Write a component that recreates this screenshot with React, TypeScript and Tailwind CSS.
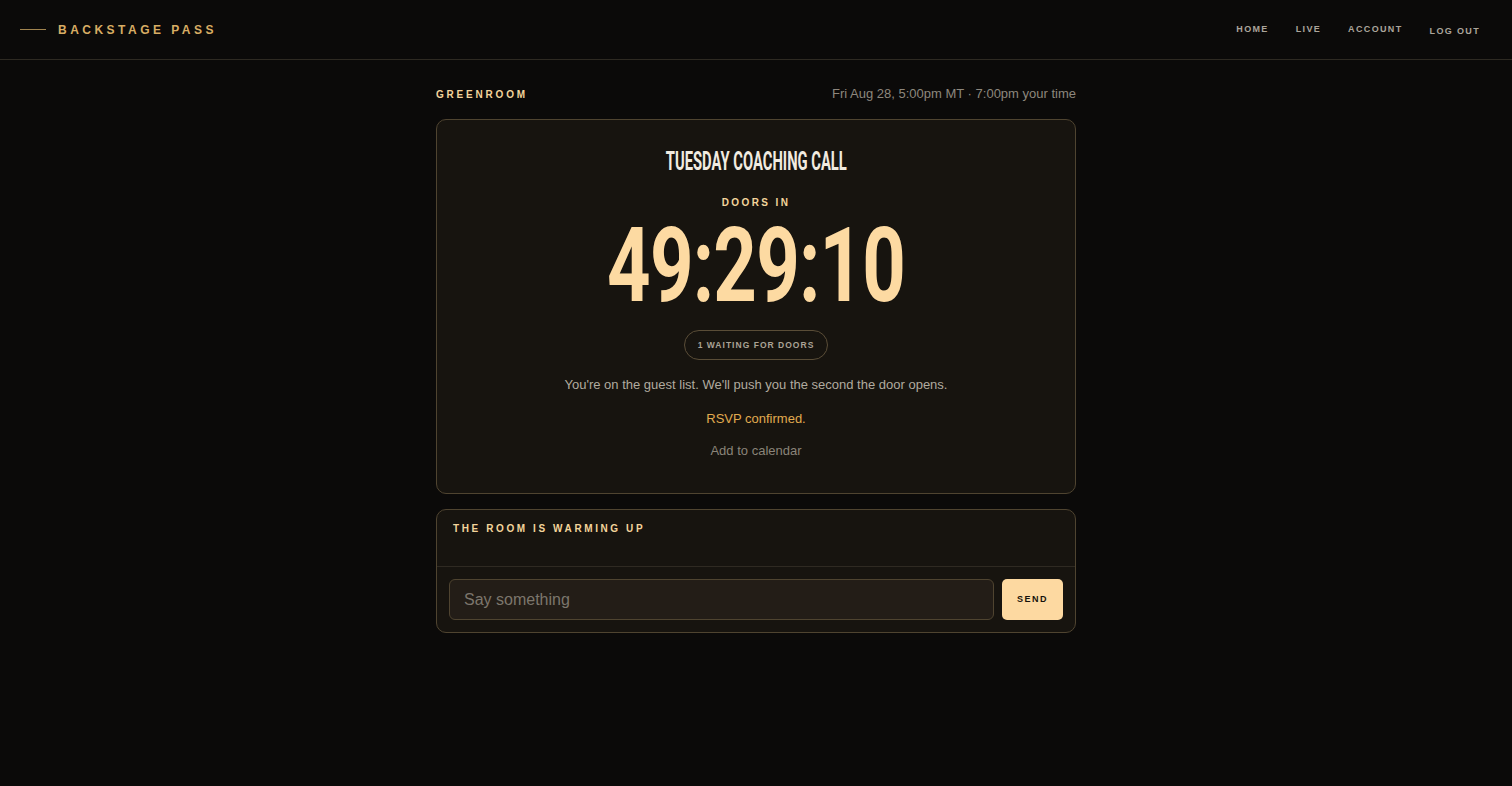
import React from "react";

const display = { fontFamily: '"Roboto", "Liberation Sans", sans-serif' };

const NavLink = ({ label, className = "" }: { label: string; className?: string }) => (
  <a className={`text-[9px] font-bold tracking-[0.15em] text-[#aba59b] ${className}`}>{label}</a>
);

export default function App() {
  return (
    <div
      className="min-h-screen bg-[#0b0a09] text-[#d9d3c7]"
      style={{ fontFamily: '"Liberation Sans", Arial, sans-serif' }}
    >
      {/* top bar */}
      <header className="h-[60px] border-b border-[#2e2a22] flex items-center justify-between pl-5 pr-8">
        <div className="flex items-center gap-3">
          <span className="block w-[26px] h-px bg-[#a0844f]" />
          <span className="text-[12px] font-bold tracking-[0.29em] text-[#d8ad64]">BACKSTAGE PASS</span>
        </div>
        <nav className="flex items-center gap-[27px]">
          <NavLink label="HOME" />
          <NavLink label="LIVE" />
          <NavLink label="ACCOUNT" />
          <NavLink label="LOG OUT" className="mt-[4px]" />
        </nav>
      </header>

      <main className="w-[640px] mx-auto pt-[27px]">
        <div className="flex items-center justify-between h-[14px]">
          <span className="text-[10px] font-bold tracking-[0.28em] text-[#f3d49b]">GREENROOM</span>
          <span className="text-[13px] text-[#8d877d]">Fri Aug 28, 5:00pm MT · 7:00pm your time</span>
        </div>

        {/* countdown card */}
        <section className="mt-[18px] h-[375px] rounded-[10px] border border-[#4f4430] bg-[#17140f] flex flex-col items-center pt-[29px]">
          <h1
            className="text-[25px] font-bold text-[#f1ebe0] leading-none scale-x-[0.59] whitespace-nowrap"
            style={display}
          >
            TUESDAY COACHING CALL
          </h1>
          <div className="mt-[23px] text-[10px] font-bold tracking-[0.24em] text-[#f3d49b] leading-[12px]">DOORS IN</div>
          <div
            className="mt-[18px] h-[78px] text-[104px] font-bold leading-[78px] text-[#fddaa2] scale-x-[0.73] tracking-[-0.01em] whitespace-nowrap"
            style={display}
          >
            49:29:10
          </div>
          <div className="mt-[25px] h-[30px] px-[13px] rounded-full border border-[#5a4d37] flex items-center text-[8.5px] font-bold tracking-[0.12em] text-[#aaa396]">
            1 WAITING FOR DOORS
          </div>
          <p className="mt-[15px] text-[13px] text-[#b1ab9f]">
            You're on the guest list. We'll push you the second the door opens.
          </p>
          <p className="mt-[14px] text-[13px] text-[#e0ab4f]">RSVP confirmed.</p>
          <p className="mt-[13px] text-[13px] text-[#8a8479]">Add to calendar</p>
        </section>

        {/* chat card */}
        <section className="mt-[15px] rounded-[10px] border border-[#4f4430] bg-[#17140f]">
          <div className="h-[57px] border-b border-[#2f2a22] px-4 pt-[5px]">
            <span className="text-[10px] font-bold tracking-[0.26em] text-[#f3d49b]">THE ROOM IS WARMING UP</span>
          </div>
          <div className="flex items-center gap-2 px-3 py-3">
            <input
              placeholder="Say something"
              className="flex-1 h-[41px] rounded-[6px] border border-[#4f4430] bg-[#231d17] px-[14px] text-[16px] text-[#d9d3c7] placeholder:text-[#7c766c] outline-none"
            />
            <button className="w-[61px] h-[41px] rounded-[5px] bg-[#fdd9a1] text-[9px] font-bold tracking-[0.16em] text-[#16120c]">
              SEND
            </button>
          </div>
        </section>
      </main>
    </div>
  );
}
